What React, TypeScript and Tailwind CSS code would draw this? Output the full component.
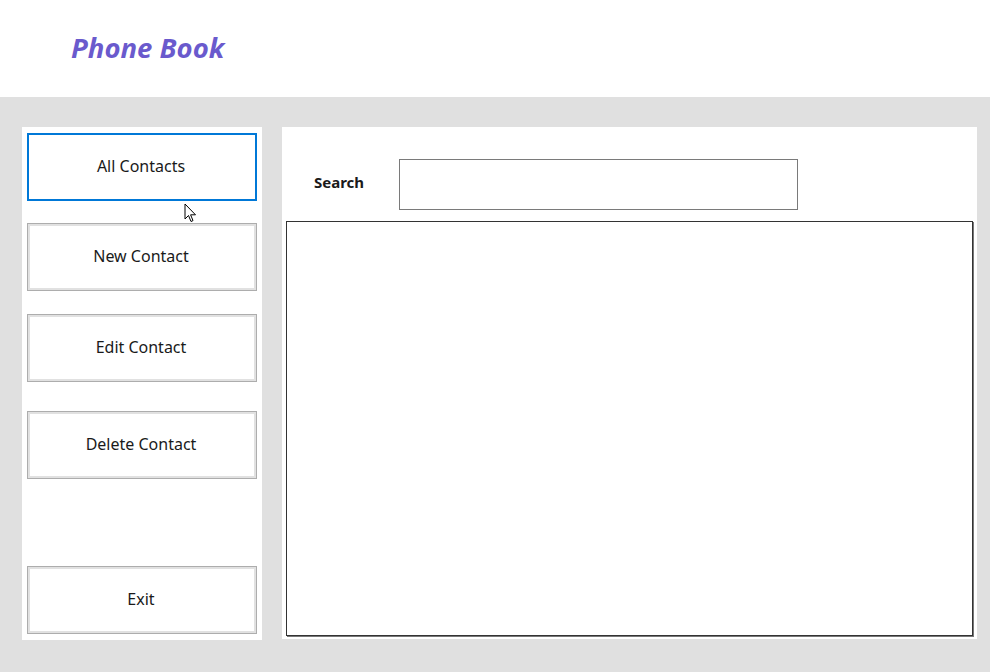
import React from 'react';

const btnBase =
  'w-[230px] h-[68px] flex items-center justify-center bg-white text-[16px] text-[#1a1a1a] pb-[2px] pr-[2px]';
const grayBtn = `${btnBase} border border-[#adadad] shadow-[inset_0_0_0_2px_#e1e1e1]`;

function Cursor() {
  return (
    <svg
      className="absolute left-[184px] top-[203px]"
      width="13"
      height="20"
      viewBox="0 0 13 20"
    >
      <path
        d="M1 1 L1 16 L4.5 12.5 L7 18.5 L9 17.6 L6.6 11.8 L11.5 11.8 Z"
        fill="white"
        stroke="black"
        strokeWidth="1"
        strokeLinejoin="round"
      />
    </svg>
  );
}

export default function App() {
  return (
    <div
      className="relative w-[990px] h-[672px] flex flex-col bg-[#e0e0e0]"
      style={{ fontFamily: '"Noto Sans", "Open Sans", sans-serif' }}
    >
      <header className="h-[97px] bg-white flex items-center pl-[71px]">
        <h1 className="text-[27.5px] font-bold italic text-[#6a5acd] -mt-[2px]">Phone Book</h1>
      </header>

      <main className="flex-1 flex pl-[22px] pt-[30px] gap-[20px]">
        <aside className="w-[240px] h-[513px] bg-white flex flex-col items-center pt-[6px]">
          <button className={`${btnBase} border-2 border-[#0078d7]`}>All Contacts</button>
          <button className={`${grayBtn} mt-[22px]`}>New Contact</button>
          <button className={`${grayBtn} mt-[23px]`}>Edit Contact</button>
          <button className={`${grayBtn} mt-[29px]`}>Delete Contact</button>
          <button className={`${grayBtn} mt-[87px]`}>Exit</button>
        </aside>

        <section className="w-[695px] h-[512px] bg-white flex flex-col px-[4px]">
          <div className="flex items-center mt-[32px] h-[51px]">
            <label className="w-[85px] pl-[28px] pb-[4px] text-[15px] font-bold text-[#1a1a1a]">Search</label>
            <input className="ml-[28px] w-[399px] h-[51px] border border-[#7a7a7a] outline-none px-2" />
          </div>
          <div className="mt-[11px] h-[415px] border border-[#333] shadow-[1px_1px_0_#777]" />
        </section>
      </main>

      <Cursor />
    </div>
  );
}
